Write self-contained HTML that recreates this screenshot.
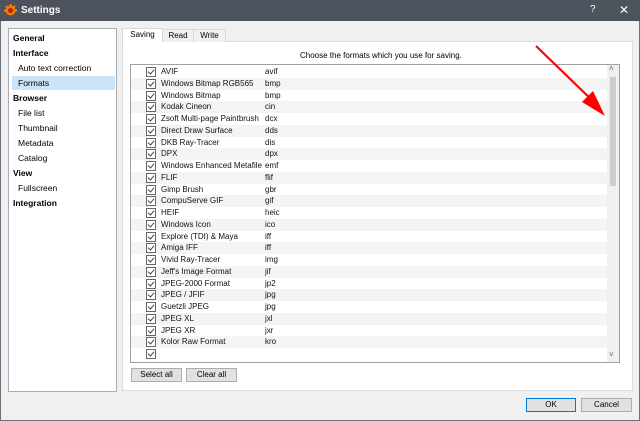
<!DOCTYPE html>
<html><head><style>
*{box-sizing:border-box;margin:0;padding:0}
body{width:640px;height:421px;position:relative;background:#f0f0f0;font-family:"Liberation Sans",sans-serif;font-size:9px;color:#000;overflow:hidden}
.abs{position:absolute}
#title{left:0;top:0;width:640px;height:21px;background:#4c535c;color:#fff;font-size:10px;font-weight:bold}
#frame{left:0;top:21px;width:640px;height:400px;border:1px solid #6a7079;border-top:none}
#side{left:8px;top:28px;width:109px;height:364px;background:#fff;border:1px solid #a9adb5}
.si{position:absolute;left:4px;height:14px;line-height:14px;font-size:8.5px}
.b{font-weight:bold}
.sub{left:9px}
#tabpanel{left:122px;top:41px;width:511px;height:350px;background:#fff;border:1px solid #dcdcdc}
.tab{position:absolute;top:29px;height:13px;line-height:12px;font-size:8px;text-align:center;border:1px solid #d9d9d9;border-bottom:none;background:#f0f0f0}
#list{left:130px;top:64px;width:490px;height:299px;border:1px solid #a0a0a0;background:#fff;overflow:hidden}
.row{position:absolute;left:0;width:476px;height:11.75px;line-height:11.75px;font-size:8px}
.cb{position:absolute;left:15px;top:1px;width:10px;height:10px;border:1px solid #666;background:#fff}
.cb:after{content:"";position:absolute;left:2px;top:0px;width:3px;height:5px;border:solid #444;border-width:0 1.2px 1.2px 0;transform:rotate(40deg)}
.n{position:absolute;left:30px;color:#111}
.e{position:absolute;left:134px;color:#111}
.btn{position:absolute;height:14px;line-height:12px;text-align:center;font-size:8px;background:#e1e1e1;border:1px solid #adadad}
</style></head><body>
<div id="frame" class="abs"></div>
<div id="title" class="abs">
<svg class="abs" style="left:4px;top:4px" width="13" height="13" viewBox="0 0 13 13"><circle cx="6.5" cy="6.5" r="5" fill="#e87a10"/><circle cx="6.5" cy="6.5" r="2.5" fill="#c02010"/><g stroke="#f5a020" stroke-width="1.5"><line x1="6.5" y1="0" x2="6.5" y2="2"/><line x1="0" y1="6.5" x2="2" y2="6.5"/><line x1="11" y1="6.5" x2="13" y2="6.5"/><line x1="2" y1="2" x2="3.2" y2="3.2"/><line x1="11" y1="2" x2="9.8" y2="3.2"/></g></svg>
<span class="abs" style="left:21px;top:5px">Settings</span>
<span class="abs" style="left:590px;top:4px;font-weight:normal;font-size:10px">?</span>
<span class="abs" style="left:619px;top:3px;font-weight:normal;font-size:12px">✕</span>
</div>
<div id="side" class="abs">
<div class="si b" style="top:2px">General</div>
<div class="si b" style="top:17px">Interface</div>
<div class="si sub" style="top:32px">Auto text correction</div>
<div class="si" style="top:47px;left:3px;width:103px;background:#cce4f7;padding-left:6px">Formats</div>
<div class="si b" style="top:62px">Browser</div>
<div class="si sub" style="top:77px">File list</div>
<div class="si sub" style="top:92px">Thumbnail</div>
<div class="si sub" style="top:107px">Metadata</div>
<div class="si sub" style="top:122px">Catalog</div>
<div class="si b" style="top:137px">View</div>
<div class="si sub" style="top:152px">Fullscreen</div>
<div class="si b" style="top:167px">Integration</div>
</div>
<div id="tabpanel" class="abs"></div>
<div class="tab" style="left:162px;width:32px">Read</div>
<div class="tab" style="left:193px;width:33px">Write</div>
<div class="tab" style="left:122px;width:41px;top:28px;height:14px;background:#fff">Saving</div>
<div class="abs" style="left:300px;top:51px;font-size:8px">Choose the formats which you use for saving.</div>
<div id="list" class="abs"></div>
<div class="abs" style="left:131px;top:66px;width:476px;height:296px;overflow:hidden" id="rows"></div>
<div class="abs" style="left:607px;top:65px;width:12px;height:297px;background:#f0f0f0"></div>
<div class="abs" style="left:610px;top:77px;width:6px;height:109px;background:#cdcdcd"></div>
<div class="abs" style="left:609px;top:64px;font-size:8px;color:#606060">˄</div>
<div class="abs" style="left:609px;top:350px;font-size:8px;color:#606060">˅</div>
<div class="btn" style="left:131px;top:368px;width:51px">Select all</div>
<div class="btn" style="left:186px;top:368px;width:51px">Clear all</div>
<div class="btn" style="left:526px;top:398px;width:50px;border:1px solid #0078d7">OK</div>
<div class="btn" style="left:581px;top:398px;width:51px">Cancel</div>
<svg class="abs" style="left:0;top:0" width="640" height="421"><line x1="536" y1="46" x2="596" y2="104" stroke="#f00" stroke-width="2.2"/><polygon points="605,116 582,102 593,91" fill="#f00"/></svg>
<script>
var d=[["AVIF","avif"],["Windows Bitmap RGB565","bmp"],["Windows Bitmap","bmp"],["Kodak Cineon","cin"],["Zsoft Multi-page Paintbrush","dcx"],["Direct Draw Surface","dds"],["DKB Ray-Tracer","dis"],["DPX","dpx"],["Windows Enhanced Metafile","emf"],["FLIF","flif"],["Gimp Brush","gbr"],["CompuServe GIF","gif"],["HEIF","heic"],["Windows Icon","ico"],["Explore (TDI) & Maya","iff"],["Amiga IFF","iff"],["Vivid Ray-Tracer","img"],["Jeff's Image Format","jif"],["JPEG-2000 Format","jp2"],["JPEG / JFIF","jpg"],["Guetzli JPEG","jpg"],["JPEG XL","jxl"],["JPEG XR","jxr"],["Kolor Raw Format","kro"],["",""]];
var h="";for(var i=0;i<d.length;i++){h+='<div class="row" style="top:'+(i*11.75)+'px;'+(i%2?'background:#f4f4f4':'background:#fff')+'"><i class="cb"></i><span class="n">'+d[i][0].replace("&","&amp;")+'</span><span class="e">'+d[i][1]+'</span></div>';}
document.getElementById("rows").innerHTML=h;
</script>
</body></html>
